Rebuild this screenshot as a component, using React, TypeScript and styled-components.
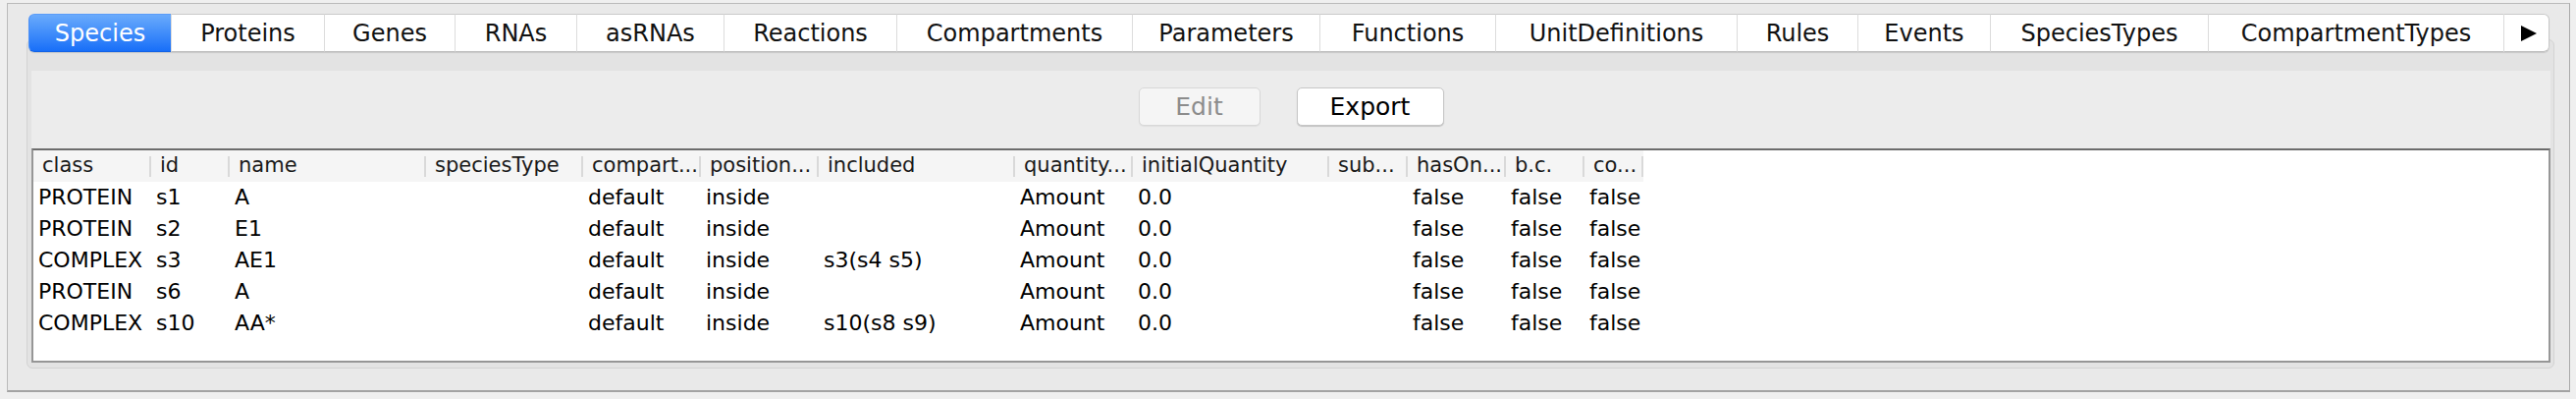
import styled, { createGlobalStyle } from "styled-components";

const GlobalStyle = createGlobalStyle`
  html, body {
    margin: 0;
    padding: 0;
    background: #efefef;
  }
  body {
    width: 2624px;
    height: 406px;
    overflow: hidden;
    font-family: "DejaVu Sans", "Liberation Sans", sans-serif;
  }
`;

const Screen = styled.div`
  padding: 3px 0 0 7px;
`;

const Window = styled.div`
  box-sizing: border-box;
  width: 2611px;
  height: 396px;
  background: #e9e9e9;
  border: 1px solid #bababa;
  border-right-color: #a8a8a8;
  border-bottom: 2px solid #a3a3a3;
  padding: 10px 15px 0 19px;
  display: flex;
  flex-direction: column;
`;

const TabStrip = styled.div`
  position: relative;
  z-index: 1;
  display: flex;
  height: 39px;
  margin-left: 2px;
  align-self: flex-start;
  border-radius: 6px;
  box-shadow: 0 1px 1px rgba(0, 0, 0, 0.12);
`;

const Tab = styled.div<{ $w: number; $active?: boolean }>`
  box-sizing: border-box;
  width: ${({ $w }) => $w}px;
  display: flex;
  align-items: center;
  justify-content: center;
  font-size: 24px;
  color: ${({ $active }) => ($active ? "#ffffff" : "#111111")};
  background: ${({ $active }) =>
    $active ? "linear-gradient(#6aabfc, #186ff8)" : "#ffffff"};
  border-top: 1px solid ${({ $active }) => ($active ? "#5b9cf8" : "#cacaca")};
  border-bottom: 1px solid ${({ $active }) => ($active ? "#1263e6" : "#bdbdbd")};
  border-left: 1px solid ${({ $active }) => ($active ? "#4a8ff7" : "#dcdcdc")};
  white-space: nowrap;

  &:first-child {
    border-radius: 6px 0 0 6px;
  }
  &:last-child {
    border-radius: 0 6px 6px 0;
    border-right: 1px solid #c8c8c8;
  }
`;

const Arrow = styled.span`
  width: 0;
  height: 0;
  border-top: 8px solid transparent;
  border-bottom: 8px solid transparent;
  border-left: 16px solid #000;
  margin-left: 4px;
`;

const Pane = styled.div`
  box-sizing: border-box;
  height: 335px;
  margin-top: -13px;
  background: #e3e3e3;
  border: 1px solid #d3d3d3;
  border-radius: 6px;
  padding: 31px 3px 5px 4px;
  display: flex;
  flex-direction: column;
`;

const Content = styled.div`
  flex: 1;
  background: #ececec;
  display: flex;
  flex-direction: column;
`;

const ButtonRow = styled.div`
  display: flex;
  justify-content: center;
  gap: 37px;
  padding-top: 17px;
  margin-bottom: 23px;
`;

const Button = styled.div<{ $w: number; $disabled?: boolean }>`
  box-sizing: border-box;
  width: ${({ $w }) => $w}px;
  height: 39px;
  display: flex;
  align-items: center;
  justify-content: center;
  font-size: 25px;
  border-radius: 5px;
  background: ${({ $disabled }) => ($disabled ? "#f5f5f5" : "#ffffff")};
  color: ${({ $disabled }) => ($disabled ? "#8c8c8c" : "#000000")};
  border: 1px solid ${({ $disabled }) => ($disabled ? "#d8d8d8" : "#c6c6c6")};
  box-shadow: 0 1px 1px rgba(0, 0, 0, ${({ $disabled }) => ($disabled ? 0.05 : 0.18)});
`;

const Table = styled.div`
  flex: 1;
  box-sizing: border-box;
  background: #ffffff;
  border: 2px solid #969696;
  border-top-color: #6c6c6c;
`;

const HeaderRow = styled.div`
  display: flex;
  height: 32px;
`;

const HeaderCell = styled.div<{ $w: number }>`
  position: relative;
  box-sizing: border-box;
  width: ${({ $w }) => $w}px;
  padding-left: 9px;
  background: #f5f5f5;
  color: #1a1a1a;
  font-size: 21px;
  line-height: 31px;
  white-space: nowrap;
  overflow: hidden;

  &::after {
    content: "";
    position: absolute;
    right: 0;
    top: 6px;
    bottom: 5px;
    width: 2px;
    background: #d9d9d9;
  }
`;

const Row = styled.div`
  display: flex;
  height: 32px;
`;

const Cell = styled.div<{ $w: number }>`
  box-sizing: border-box;
  width: ${({ $w }) => $w}px;
  padding-left: 5px;
  color: #000000;
  font-size: 22px;
  line-height: 32px;
  white-space: nowrap;
  overflow: hidden;
`;

const tabs = [
  { label: "Species", w: 145 },
  { label: "Proteins", w: 156 },
  { label: "Genes", w: 133 },
  { label: "RNAs", w: 124 },
  { label: "asRNAs", w: 150 },
  { label: "Reactions", w: 176 },
  { label: "Compartments", w: 240 },
  { label: "Parameters", w: 191 },
  { label: "Functions", w: 179 },
  { label: "UnitDefinitions", w: 246 },
  { label: "Rules", w: 123 },
  { label: "Events", w: 135 },
  { label: "SpeciesTypes", w: 222 },
  { label: "CompartmentTypes", w: 301 },
];

const columns = [
  { label: "class", w: 120 },
  { label: "id", w: 80 },
  { label: "name", w: 200 },
  { label: "speciesType", w: 160 },
  { label: "compart...", w: 120 },
  { label: "position...", w: 120 },
  { label: "included", w: 200 },
  { label: "quantity...", w: 120 },
  { label: "initialQuantity", w: 200 },
  { label: "sub...", w: 80 },
  { label: "hasOn...", w: 100 },
  { label: "b.c.", w: 80 },
  { label: "co...", w: 60 },
];

const rows = [
  ["PROTEIN", "s1", "A", "", "default", "inside", "", "Amount", "0.0", "", "false", "false", "false"],
  ["PROTEIN", "s2", "E1", "", "default", "inside", "", "Amount", "0.0", "", "false", "false", "false"],
  ["COMPLEX", "s3", "AE1", "", "default", "inside", "s3(s4 s5)", "Amount", "0.0", "", "false", "false", "false"],
  ["PROTEIN", "s6", "A", "", "default", "inside", "", "Amount", "0.0", "", "false", "false", "false"],
  ["COMPLEX", "s10", "AA*", "", "default", "inside", "s10(s8 s9)", "Amount", "0.0", "", "false", "false", "false"],
];

export default function App() {
  return (
    <>
      <GlobalStyle />
      <Screen>
        <Window>
          <TabStrip>
            {tabs.map((t, i) => (
              <Tab key={t.label} $w={t.w} $active={i === 0}>
                {t.label}
              </Tab>
            ))}
            <Tab $w={47}>
              <Arrow />
            </Tab>
          </TabStrip>

          <Pane>
            <Content>
              <ButtonRow>
                <Button $w={124} $disabled>
                  Edit
                </Button>
                <Button $w={150}>Export</Button>
              </ButtonRow>

              <Table>
                <HeaderRow>
                  {columns.map((c) => (
                    <HeaderCell key={c.label} $w={c.w}>
                      {c.label}
                    </HeaderCell>
                  ))}
                </HeaderRow>
                {rows.map((r, ri) => (
                  <Row key={ri}>
                    {r.map((v, ci) => (
                      <Cell key={ci} $w={columns[ci].w}>
                        {v}
                      </Cell>
                    ))}
                  </Row>
                ))}
              </Table>
            </Content>
          </Pane>
        </Window>
      </Screen>
    </>
  );
}
